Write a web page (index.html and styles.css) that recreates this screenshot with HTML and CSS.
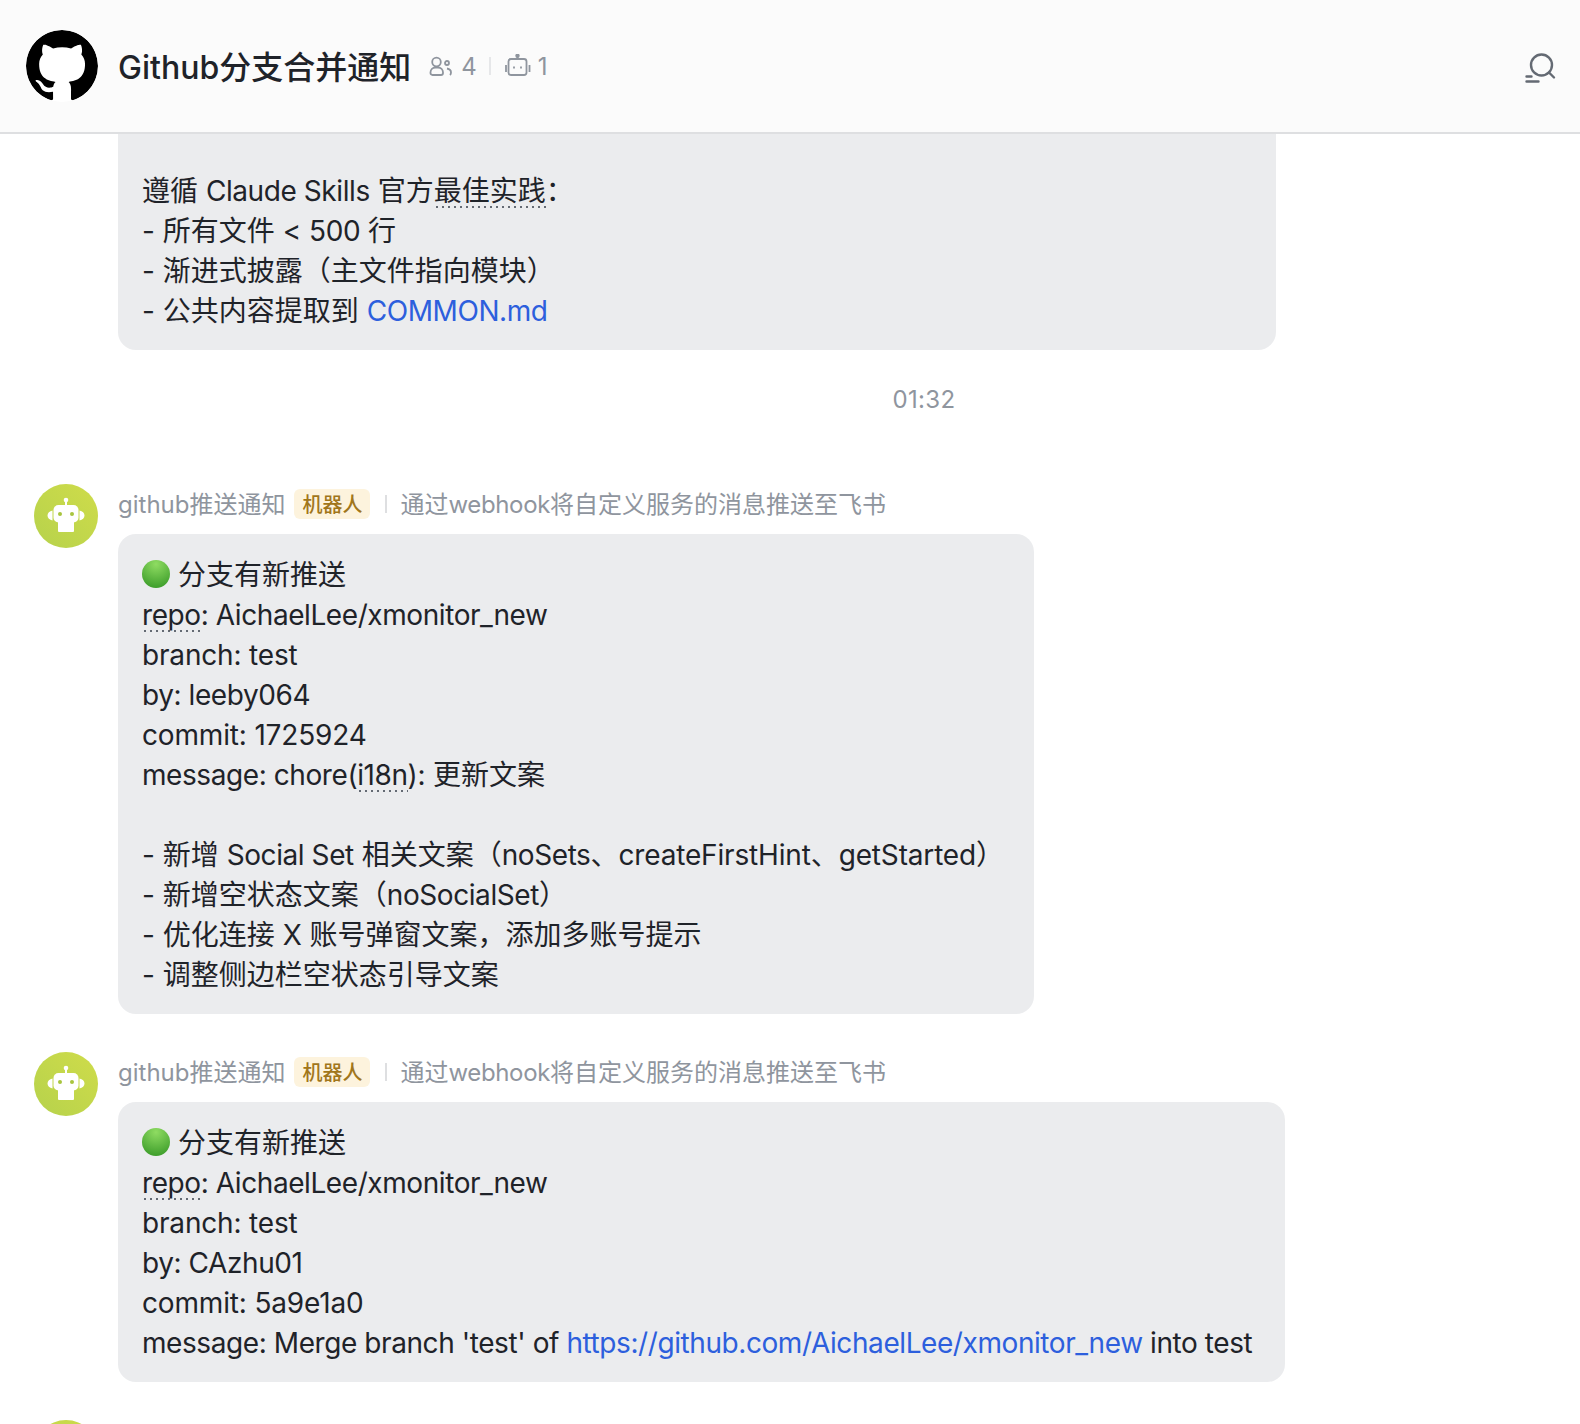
FILE: index.html
```html
<!DOCTYPE html>
<html lang="en">

<head>
    <meta charset="UTF-8">
    <meta name="viewport" content="width=device-width, initial-scale=1.0">
    <title>Github分支合并通知</title>
    <link rel="stylesheet" href="styles.css">
</head>

<body>
    <header class="chat-header">
        <svg class="group-logo" viewBox="0 0 16 16">
            <path fill="#000" fill-rule="evenodd" d="M8 0C3.58 0 0 3.58 0 8c0 3.54 2.29 6.53 5.47 7.59.4.07.55-.17.55-.38 0-.19-.01-.82-.01-1.49-2.01.37-2.53-.49-2.69-.94-.09-.23-.48-.94-.82-1.13-.28-.15-.68-.52-.01-.53.63-.01 1.08.58 1.23.82.72 1.21 1.87.87 2.33.66.07-.52.28-.87.51-1.07-1.78-.2-3.64-.89-3.64-3.95 0-.87.31-1.59.82-2.15-.08-.2-.36-1.02.08-2.12 0 0 .67-.21 2.2.82.64-.18 1.32-.27 2-.27s1.36.09 2 .27c1.53-1.04 2.2-.82 2.2-.82.44 1.1.16 1.92.08 2.12.51.56.82 1.27.82 2.15 0 3.07-1.87 3.75-3.65 3.95.29.25.54.73.54 1.48 0 1.07-.01 1.93-.01 2.2 0 .21.15.46.55.38A8.01 8.01 0 0 0 16 8c0-4.42-3.58-8-8-8z"/>
        </svg>
        <h1 class="group-title">Github分支合并通知</h1>
        <div class="group-meta">
            <svg class="meta-icon meta-users" viewBox="0 0 24 20">
                <circle cx="7.500" cy="6" r="4.300"/>
                <path d="M1.500 17v-.5c0-3 2.200-5 5-5h2.500c2.800 0 5 2 5 5v.5c0 1.200-.8 2-2 2h-8.500c-1.200 0-2-.8-2-2z"/>
                <circle cx="18" cy="7" r="2"/>
                <path d="M18 12.500c2.500.5 4 2 4 4 0 1-.3 1.800-1 2.500"/>
            </svg>
            <span>4</span>
            <i class="meta-sep"></i>
            <svg class="meta-icon meta-bot" viewBox="0 0 26 22">
                <circle cx="12.500" cy="1.800" r="1.300" fill="#8f959e"/>
                <path d="M12.500 3v2"/>
                <rect x="3.500" y="5" width="18" height="16" rx="2.500"/>
                <path d="M1 11v7M24.500 11v7M9 12.500v2M16 12.500v2"/>
            </svg>
            <span>1</span>
        </div>
        <svg class="search-icon" viewBox="0 0 32 32">
            <circle cx="17.500" cy="13" r="10.500"/>
            <path d="M25 20.500l5 5M2.500 24.500h5M2.500 29.500h12"/>
        </svg>
    </header>

    <main class="chat-list">
        <div class="bubble bubble-clipped">遵循 <span class="lt">Claude Skills</span> 官方<span class="term">最佳实践</span>：<br>
            - 所有文件 &lt; <span class="lt">500</span> 行<br>
            - 渐进式披露（主文件指向模块）<br>
            - 公共内容提取到 <a class="lt" href="#">COMMON.md</a></div>

        <div class="time-row">01:32</div>

        <div class="message">
            <svg class="bot-avatar" viewBox="0 0 64 64">
                <defs>
                    <linearGradient id="lime" x1="0" y1="1" x2="1" y2="0">
                        <stop offset="0" stop-color="#b6d24c"/>
                        <stop offset="1" stop-color="#cfdc4a"/>
                    </linearGradient>
                </defs>
                <circle cx="32" cy="32" r="32" fill="url(#lime)"/>
                <circle cx="32" cy="16" r="2.300" fill="#fff"/>
                <rect x="31" y="17" width="2" height="5" fill="#fff"/>
                <rect x="19.500" y="21" width="25" height="17.500" rx="5" fill="#fff"/>
                <path d="M18.500 26.500v10c-3-.5-5-2.500-5-5s2-4.500 5-5zM45.500 26.500v10c3-.5 5-2.500 5-5s-2-4.500-5-5z" fill="#fff"/>
                <circle cx="26" cy="30" r="2" fill="#a8c53e"/>
                <circle cx="38" cy="30" r="2" fill="#a8c53e"/>
                <path d="M24 38h16v9a1 1 0 0 1-1 1H25a1 1 0 0 1-1-1z" fill="#fff"/>
            </svg>
            <div class="message-body">
                <div class="sender-row">
                    <span class="sender-text">github推送通知</span>
                    <span class="bot-badge">机器人</span>
                    <i class="sender-sep"></i>
                    <span class="sender-text">通过<span class="lt">webhook</span>将自定义服务的消息推送至飞书</span>
                </div>
                <div class="bubble bubble-wide">
                    <span class="green-dot"></span> 分支有新推送<br>
                    <span class="lt"><span class="term">repo</span>: AichaelLee/xmonitor_new</span><br>
                    <span class="lt-loose">branch: test</span><br>
                    <span class="lt">by: leeby064</span><br>
                    <span class="lt-loose">commit: 1725924</span><br>
                    <span class="lt">message: chore(<span class="term">i18n</span>):</span> 更新文案<br>
                    <br>
                    - 新增 <span class="lt">Social Set</span> 相关文案（<span class="lt">noSets</span>、<span class="lt-loose">createFirstHint</span>、<span class="lt-loose">getStarted</span>）<br>
                    - 新增空状态文案（<span class="lt">noSocialSet</span>）<br>
                    - 优化连接 X 账号弹窗文案，添加多账号提示<br>
                    - 调整侧边栏空状态引导文案
                </div>
            </div>
        </div>

        <div class="message">
            <svg class="bot-avatar" viewBox="0 0 64 64">
                <circle cx="32" cy="32" r="32" fill="url(#lime)"/>
                <circle cx="32" cy="16" r="2.300" fill="#fff"/>
                <rect x="31" y="17" width="2" height="5" fill="#fff"/>
                <rect x="19.500" y="21" width="25" height="17.500" rx="5" fill="#fff"/>
                <path d="M18.500 26.500v10c-3-.5-5-2.500-5-5s2-4.500 5-5zM45.500 26.500v10c3-.5 5-2.500 5-5s-2-4.500-5-5z" fill="#fff"/>
                <circle cx="26" cy="30" r="2" fill="#a8c53e"/>
                <circle cx="38" cy="30" r="2" fill="#a8c53e"/>
                <path d="M24 38h16v9a1 1 0 0 1-1 1H25a1 1 0 0 1-1-1z" fill="#fff"/>
            </svg>
            <div class="message-body">
                <div class="sender-row">
                    <span class="sender-text">github推送通知</span>
                    <span class="bot-badge">机器人</span>
                    <i class="sender-sep"></i>
                    <span class="sender-text">通过<span class="lt">webhook</span>将自定义服务的消息推送至飞书</span>
                </div>
                <div class="bubble bubble-full">
                    <span class="green-dot"></span> 分支有新推送<br>
                    <span class="lt"><span class="term">repo</span>: AichaelLee/xmonitor_new</span><br>
                    <span class="lt-loose">branch: test</span><br>
                    <span class="lt">by: CAzhu01</span><br>
                    <span class="lt-loose">commit: 5a9e1a0</span><br>
                    <span class="lt">message: Merge branch 'test' of <a href="#">https://github.com/AichaelLee/xmonitor_new</a> into test</span>
                </div>
            </div>
        </div>

        <div class="message">
            <svg class="bot-avatar" viewBox="0 0 64 64">
                <circle cx="32" cy="32" r="32" fill="url(#lime)"/>
            </svg>
        </div>
    </main>
</body>

</html>
```

FILE: styles.css
```css
* {
    box-sizing: border-box;
}

body {
    margin: 0;
    height: 100vh;
    overflow: hidden;
    background: #fff;
    color: #1f2329;
    font-family: Inter, "Noto Sans CJK SC", sans-serif;
    display: flex;
    flex-direction: column;
}

.chat-header {
    flex: none;
    height: 134px;
    padding: 0 24px 0 26px;
    display: flex;
    align-items: center;
    background: #fbfbfb;
    border-bottom: 2px solid #dedfe1;
}

.group-logo {
    width: 72px;
    height: 72px;
    margin-right: 20px;
    background: #fff;
    border-radius: 50%;
}

.group-title {
    margin: 4px 0 0;
    font-size: 32px;
    font-weight: 500;
    line-height: 44px;
}

.group-meta {
    display: flex;
    align-items: center;
    margin-left: 18px;
    font-size: 24px;
    color: #8f959e;
}

.meta-icon {
    fill: none;
    stroke: #8f959e;
    stroke-width: 1.800;
}

.meta-users {
    width: 24px;
    height: 20px;
    margin-right: 8px;
}

.meta-bot {
    width: 26px;
    height: 22px;
    margin: -2px 7px 0 0;
}

.meta-sep {
    width: 2px;
    height: 18px;
    margin: 0 14px 0 12px;
    background: #e6e7e9;
}

.search-icon {
    width: 32px;
    height: 32px;
    margin: 3px 0 0 auto;
    fill: none;
    stroke: #646a73;
    stroke-width: 2.400;
    stroke-linecap: round;
}

.chat-list {
    flex: 1;
    min-height: 0;
    overflow: hidden;
}

.lt {
    letter-spacing: -0.015em;
}

.lt-loose {
    letter-spacing: -0.006em;
}

.bubble {
    background: #ebecee;
    border-radius: 18px;
    padding: 21px 24px 19px;
    font-size: 28px;
    line-height: 40px;
}

.bubble a {
    color: #2d5fdd;
    text-decoration: none;
}

.bubble-clipped {
    width: 1158px;
    margin-left: 118px;
    padding-top: 37px;
    border-radius: 0 0 18px 18px;
}

.bubble-wide {
    width: 916px;
}

.bubble-full {
    width: 1167px;
}

.term {
    display: inline-block;
    line-height: 31px;
    padding-bottom: 1px;
    background: repeating-linear-gradient(90deg, #646a73 0 2px, transparent 2px 6px) 2px bottom / 100% 2px no-repeat;
}

.green-dot {
    display: inline-block;
    width: 28px;
    height: 28px;
    vertical-align: -3px;
    border-radius: 50%;
    background: radial-gradient(circle at 50% 15%, #8fdc62, #3f9f2c 85%);
}

.time-row {
    height: 40px;
    margin-top: 30px;
    padding-left: 268px;
    text-align: center;
    font-size: 24px;
    line-height: 40px;
    letter-spacing: 0.3px;
    color: #8f959e;
}

.message {
    display: flex;
    gap: 20px;
    margin: 38px 0 0 34px;
}

.time-row + .message {
    margin-top: 64px;
}

.bot-avatar {
    flex: none;
    width: 64px;
    height: 64px;
}

.message-body {
    min-width: 0;
}

.sender-row {
    height: 30px;
    margin: 5px 0 15px;
    display: flex;
    align-items: center;
    font-size: 24px;
    color: #8f959e;
}

.sender-text {
    margin-top: -4px;
}

.bot-badge {
    height: 30px;
    margin-left: 9px;
    padding: 0 8px;
    border-radius: 6px;
    background: #fdf3dd;
    color: #a1761b;
    font-size: 20px;
    font-weight: 500;
    line-height: 32px;
}

.sender-sep {
    width: 2px;
    height: 18px;
    margin: 0 13px 0 15px;
    background: #dedfe1;
}
```
